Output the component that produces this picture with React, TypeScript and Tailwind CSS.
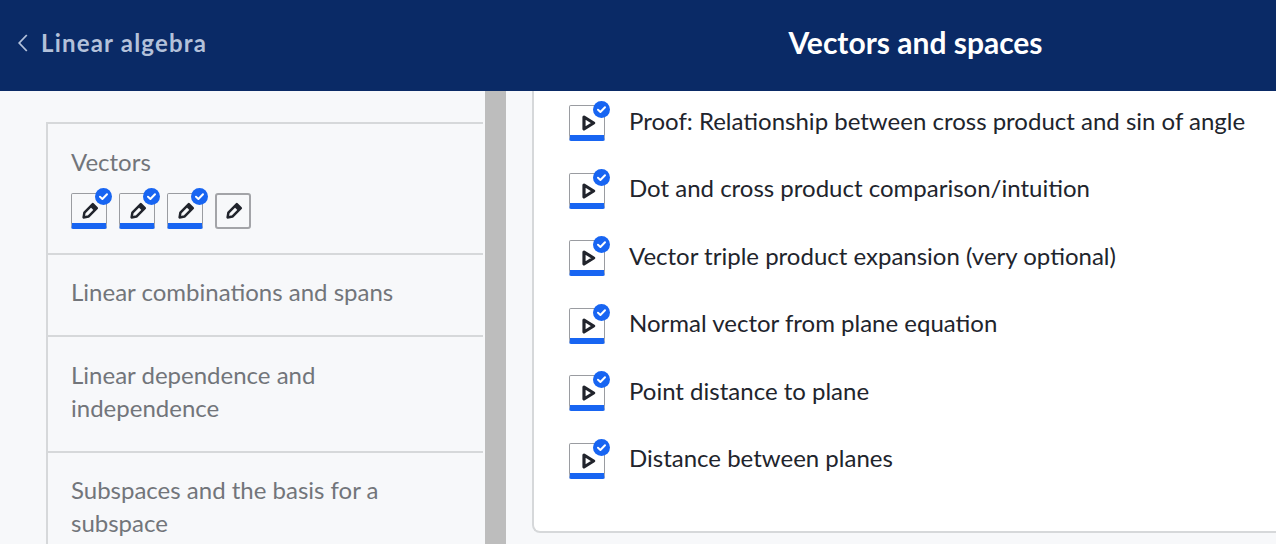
const lessons = [
  "Proof: Relationship between cross product and sin of angle",
  "Dot and cross product comparison/intuition",
  "Vector triple product expansion (very optional)",
  "Normal vector from plane equation",
  "Point distance to plane",
  "Distance between planes",
];

function Badge({ up }: { up: boolean }) {
  return (
    <span
      className={`absolute -right-[6px] flex h-[17px] w-[17px] items-center justify-center rounded-full bg-[#1865f2] ${
        up ? "-top-[6px]" : "-top-[5px]"
      }`}
    >
      <svg width="11" height="11" viewBox="0 0 11 11" fill="none">
        <path d="M2 5.8 L4.4 8 L9 3.2" stroke="#fff" strokeWidth="2" strokeLinecap="round" strokeLinejoin="round" />
      </svg>
    </span>
  );
}

function Pencil() {
  return (
    <svg className="ml-[1px]" width="18" height="18" viewBox="0 0 18 18" fill="none">
      <path
        d="M11.8 2.2 L15.8 6.2 L7.4 14.6 L2.6 15.4 L3.4 10.6 Z"
        stroke="#21242c"
        strokeWidth="2.5"
        strokeLinejoin="round"
      />
      <path d="M11.8 2.2 L15.8 6.2 L13.4 8.6 L9.4 4.6 Z" fill="#21242c" stroke="#21242c" strokeWidth="1" />
    </svg>
  );
}

function Play() {
  return (
    <svg className="ml-[3px]" width="14" height="16" viewBox="0 0 14 16" fill="none">
      <path d="M2 2 L11.6 8 L2 14 Z" stroke="#21242c" strokeWidth="3.2" strokeLinejoin="round" />
    </svg>
  );
}

function TaskIcon({ done, kind }: { done: boolean; kind: "pencil" | "play" }) {
  return (
    <div
      className={`relative flex h-9 w-9 shrink-0 items-center justify-center ${
        done
          ? "rounded-[2px] border border-[#9a9ca1] border-b-[6px] border-b-[#1865f2] pt-[5px]"
          : "rounded-[3px] border-2 border-[#a3a4a8]"
      }`}
    >
      {kind === "pencil" ? <Pencil /> : <Play />}
      {done && <Badge up={kind === "pencil"} />}
    </div>
  );
}

export default function App() {
  return (
    <div className="flex h-[544px] w-[1276px] flex-col overflow-hidden bg-[#f7f8fa] font-['Lato',sans-serif]">
      {/* Header */}
      <div className="flex h-[91px] shrink-0 items-center bg-[#0a2a66] pb-[6px]">
        <div className="flex w-[555px] items-center pl-[18px] text-[#b3c1da]">
          <svg width="10" height="18" viewBox="0 0 10 18" fill="none">
            <path d="M8.8 1 L1.2 9 L8.8 17" stroke="currentColor" strokeWidth="1.8" />
          </svg>
          <span className="ml-[13px] text-[24px] font-bold tracking-[1.2px]">Linear algebra</span>
        </div>
        <h1 className="w-[721px] text-center text-[30px] font-bold text-white">Vectors and spaces</h1>
      </div>

      <div className="flex min-h-0 flex-1">
        {/* Sidebar */}
        <div className="w-[485px] shrink-0 pl-[46px] pr-[2px] pt-[31px]">
          <div className="border-2 border-r-0 border-[#d6d8da] text-[24px] leading-[33px] text-[#72757a]">
            <div className="h-[129px] pl-[23px] pt-[21px]">
              <div>Vectors</div>
              <div className="mt-[15px] flex gap-3">
                <TaskIcon done kind="pencil" />
                <TaskIcon done kind="pencil" />
                <TaskIcon done kind="pencil" />
                <TaskIcon done={false} kind="pencil" />
              </div>
            </div>
            <div className="h-[82px] border-t-2 border-[#d6d8da] pl-[23px] pt-[20px]">Linear combinations and spans</div>
            <div className="h-[116px] border-t-2 border-[#d6d8da] pl-[23px] pt-[21px]">
              Linear dependence and
              <br />
              independence
            </div>
            <div className="h-[116px] border-t-2 border-[#d6d8da] pl-[23px] pt-[20px]">
              Subspaces and the basis for a
              <br />
              subspace
            </div>
          </div>
        </div>

        {/* Scrollbar */}
        <div className="w-[21px] shrink-0 bg-[#bdbdbd]" />

        {/* Main */}
        <div className="min-w-0 flex-1 pl-[26px]">
          <div className="h-[442px] rounded-bl-[8px] border-b-2 border-l-2 border-[#d6d8da] bg-white pl-[35px] pt-[14px]">
            {lessons.map((title) => (
              <div key={title} className="flex h-[67.5px] items-start gap-6">
                <TaskIcon done kind="play" />
                <span className="-mt-[2.25px] text-[24px] leading-[36px] whitespace-nowrap text-[#21242c]">{title}</span>
              </div>
            ))}
          </div>
        </div>
      </div>
    </div>
  );
}
